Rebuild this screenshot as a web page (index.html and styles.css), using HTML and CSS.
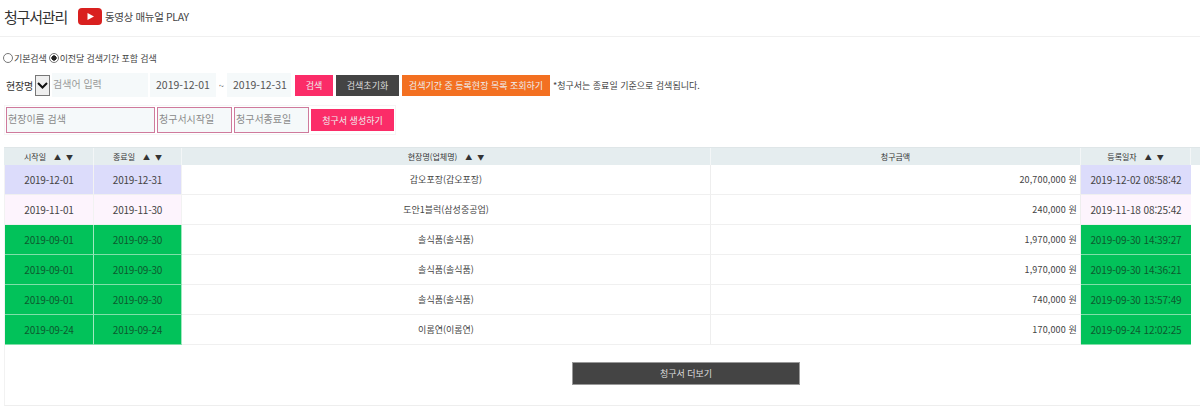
FILE: index.html
```html
<!DOCTYPE html>
<html lang="ko">
<head>
<meta charset="utf-8">
<title>청구서관리</title>
<link rel="stylesheet" href="styles.css">
</head>
<body>
<header class="top">
  <h1 class="title">청구서관리</h1>
  <a class="play">
    <svg class="yt" width="24" height="17" viewBox="0 0 24 17"><rect width="24" height="17" rx="4" fill="#d9201f"/><path d="M9.5 5 L16 8.5 L9.5 12 Z" fill="#fff"/></svg>
    <span>동영상 매뉴얼 PLAY</span>
  </a>
</header>
<div class="radios">
  <label class="radio"><i class="dot"></i>기본검색</label>
  <label class="radio"><i class="dot on"></i>이전달 검색기간 포함 검색</label>
</div>
<div class="search">
  <div class="select"><span class="select-text">현장명</span><span class="select-arrow"><svg width="11" height="7" viewBox="0 0 11 7"><path d="M1 1 L5.5 5.5 L10 1" fill="none" stroke="#111" stroke-width="2"/></svg></span></div>
  <div class="field keyword">검색어 입력</div>
  <div class="field date">2019-12-01</div>
  <span class="tilde">~</span>
  <div class="field date d2">2019-12-31</div>
  <button class="btn pink b1">검색</button>
  <button class="btn dark b2">검색초기화</button>
  <button class="btn orange b3">검색기간 중 등록현장 목록 조회하기</button>
  <span class="note">*청구서는 종료일 기준으로 검색됩니다.</span>
</div>
<div class="create">
  <div class="cfield c1">현장이름 검색</div>
  <div class="cfield c2">청구서시작일</div>
  <div class="cfield c2">청구서종료일</div>
  <button class="btn pink c3">청구서 생성하기</button>
</div>
<div class="panel">
  <div class="head-row">
    <div class="th w1">시작일<span class="sort">▲</span><span class="sort">▼</span></div>
    <div class="th w2">종료일<span class="sort">▲</span><span class="sort">▼</span></div>
    <div class="th w3">현장명(업체명)<span class="sort">▲</span><span class="sort">▼</span></div>
    <div class="th w4">청구금액</div>
    <div class="th w5">등록일자<span class="sort">▲</span><span class="sort">▼</span></div>
    <div class="th w6"></div>
  </div>
  <div class="row lav"><div class="td w1 c">2019-12-01</div><div class="td w2 c">2019-12-31</div><div class="td w3">갑오포장(갑오포장)</div><div class="td w4">20,700,000 원</div><div class="td w5 c">2019-12-02 08:58:42</div></div>
  <div class="row pale"><div class="td w1 c">2019-11-01</div><div class="td w2 c">2019-11-30</div><div class="td w3">도안1블럭(삼성중공업)</div><div class="td w4">240,000 원</div><div class="td w5 c">2019-11-18 08:25:42</div></div>
  <div class="row green"><div class="td w1 c">2019-09-01</div><div class="td w2 c">2019-09-30</div><div class="td w3">솔식품(솔식품)</div><div class="td w4">1,970,000 원</div><div class="td w5 c">2019-09-30 14:39:27</div></div>
  <div class="row green"><div class="td w1 c">2019-09-01</div><div class="td w2 c">2019-09-30</div><div class="td w3">솔식품(솔식품)</div><div class="td w4">1,970,000 원</div><div class="td w5 c">2019-09-30 14:36:21</div></div>
  <div class="row green"><div class="td w1 c">2019-09-01</div><div class="td w2 c">2019-09-30</div><div class="td w3">솔식품(솔식품)</div><div class="td w4">740,000 원</div><div class="td w5 c">2019-09-30 13:57:49</div></div>
  <div class="row green"><div class="td w1 c">2019-09-24</div><div class="td w2 c">2019-09-24</div><div class="td w3">이롬연(이롬연)</div><div class="td w4">170,000 원</div><div class="td w5 c">2019-09-24 12:02:25</div></div>
  <div class="more-wrap"><button class="more">청구서 더보기</button></div>
</div>
</body>
</html>
```
FILE: styles.css
```css
* { box-sizing: border-box; }
html, body { margin: 0; padding: 0; }
body {
  width: 1200px;
  height: 406px;
  overflow: hidden;
  background: #fff;
  color: #444;
  font-family: "Noto Sans CJK KR", "Noto Sans", sans-serif;
  font-size: 9px;
}
.top {
  height: 37px;
  display: flex;
  align-items: center;
  padding-left: 4px;
  padding-bottom: 3px;
  border-bottom: 1px solid #f0f0f0;
}
.title {
  margin: 0;
  font-size: 15px;
  font-weight: 400;
  letter-spacing: -1.2px;
  color: #333;
  width: 74px;
}
.play { display: flex; align-items: center; gap: 3px; font-size: 10.5px; letter-spacing: -0.35px; color: #444; }
.yt { display: block; }
.radios {
  display: flex;
  gap: 2px;
  margin-top: 13px;
  padding-left: 3px;
  height: 16px;
  align-items: center;
  font-size: 9px;
  letter-spacing: -0.12px;
  color: #444;
}
.radio { display: flex; align-items: center; }
.dot {
  width: 10px;
  height: 10px;
  border: 1px solid #777;
  border-radius: 50%;
  margin-right: 1px;
  display: block;
}
.dot.on { background: radial-gradient(circle, #222 0 2.4px, #fff 2.9px); }
.search {
  margin-top: 7px;
  height: 24px;
  padding-left: 4px;
  display: flex;
  align-items: center;
}
.select {
  width: 46px;
  height: 21px;
  display: flex;
  align-items: stretch;
  background: #fff;
  margin-top: 1px;
}
.select-text { flex: 1; font-size: 10px; line-height: 22px; padding-left: 2px; color: #333; letter-spacing: -0.2px; }
.select-arrow {
  width: 15px;
  border: 1px solid #777;
  background: #efefef;
  display: flex;
  align-items: center;
  justify-content: center;
}
.field {
  height: 24px;
  background: #f5f9fa;
  font-size: 10px;
  line-height: 23px;
}
.keyword { width: 96px; margin: 0 2px; color: #999; padding-left: 1px; line-height: 22px; }
.date { width: 66px; font-size: 10.5px; color: #555; padding-left: 6px; }
.tilde { width: 11px; text-align: center; font-size: 9px; color: #555; }
.d2 { width: 64px; padding-left: 6px; }
.btn {
  border: 0;
  padding: 0;
  font-family: inherit;
  font-size: 9px;
  color: #eee;
  text-align: center;
  height: 21px;
}
.pink { background: #fb2c68; }
.dark { background: #444; color: #ddd; }
.orange { background: #f37021; }
.b1 { width: 38px; margin-left: 4px; }
.b2 { width: 63px; margin-left: 3px; }
.b3 { width: 148px; margin-left: 3px; }
.note { margin-left: 3px; font-size: 9px; color: #444; }
.create {
  margin: 8px 0 0 4px;
  width: 392px;
  height: 30px;
  border: 1px solid #f5f5f5;
  display: flex;
  align-items: center;
  padding-left: 1px;
  gap: 2px;
}
.cfield {
  height: 26px;
  border: 1px solid #cf7a9c;
  background: #f5f9fa;
  font-size: 10px;
  line-height: 22px;
  color: #8a8a8a;
  padding-left: 1px;
}
.c1 { width: 149px; }
.c2 { width: 75px; }
.c3 { width: 83px; height: 22px; }
.panel {
  margin: 12px 0 0 4px;
  width: 1196px;
  height: 259px;
  border-bottom: 1px solid #eee;
  border-left: 1px solid #f2f2f2;
}
.head-row {
  display: flex;
  height: 18px;
  background: #e5edef;
  border-top: 1px solid #dfe6e8;
  margin-left: -1px;
}
.row { display: flex; height: 30px; }
.th {
  font-size: 8px;
  line-height: 18px;
  text-align: center;
  color: #333;
  border-right: 1px solid #f3f6f7;
  white-space: nowrap;
}
.sort { font-size: 7px; margin-left: 5px; color: #333; }
.sort:first-of-type { margin-left: 8px; }
.w1 { width: 89px; }
.w2 { width: 88px; }
.w3 { width: 529px; }
.w4 { width: 370px; }
.w5 { width: 110px; }
.w6 { flex: 1; border-right: 0; }
.head-row .w1 { width: 90px; }
.td {
  font-size: 9px;
  line-height: 30px;
  text-align: center;
  border-right: 1px solid #eee;
  border-bottom: 1px solid #f0f0f0;
  background: #fff;
  color: #444;
}
.td.w4 { text-align: right; padding-right: 3px; letter-spacing: 0.15px; }
.td.c { font-size: 10px; letter-spacing: -0.2px; border-right-color: #f2f2f2; }
.td.w5.c { letter-spacing: -0.1px; border-right: 0; }
.lav .c { background: #dcdcfb; }
.pale .c { background: #fdf4fd; }
.green .c { background: #02c25a; color: #0d5a2f; border-right-color: #a0e8bf; border-bottom-color: #7fdfa8; }
.more-wrap { height: 60px; padding: 17px 0 0 567px; }
.more {
  display: block;
  width: 228px;
  height: 23px;
  border: 1px solid #999;
  background: #444;
  color: #ddd;
  font-family: inherit;
  font-size: 9px;
  padding: 0;
}
```
